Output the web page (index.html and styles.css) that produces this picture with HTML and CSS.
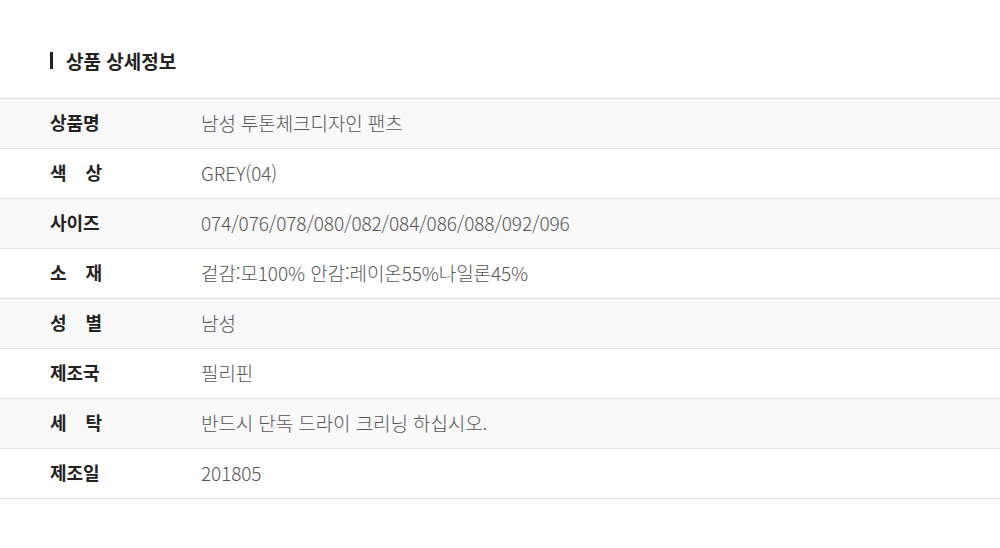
FILE: index.html
```html
<!DOCTYPE html>
<html lang="ko">
<head>
  <meta charset="UTF-8">
  <title>상품 상세정보</title>
  <link rel="stylesheet" href="styles.css">
</head>
<body>
  <div class="detail">
    <!-- 제목 -->
    <h2 class="detail-title">상품 상세정보</h2>

    <!-- 정보 표 -->
    <table class="info">
      <tr>
        <th><span class="label">상품명</span></th>
        <td>남성 투톤체크디자인 팬츠</td>
      </tr>
      <tr>
        <th><span class="label">색 상</span></th>
        <td>GREY(04)</td>
      </tr>
      <tr>
        <th><span class="label">사이즈</span></th>
        <td>074/076/078/080/082/084/086/088/092/096</td>
      </tr>
      <tr>
        <th><span class="label">소 재</span></th>
        <td>겉감:모100% 안감:레이온55%나일론45%</td>
      </tr>
      <tr>
        <th><span class="label">성 별</span></th>
        <td>남성</td>
      </tr>
      <tr>
        <th><span class="label">제조국</span></th>
        <td>필리핀</td>
      </tr>
      <tr>
        <th><span class="label">세 탁</span></th>
        <td>반드시 단독 드라이 크리닝 하십시오.</td>
      </tr>
      <tr>
        <th><span class="label">제조일</span></th>
        <td>201805</td>
      </tr>
    </table>
  </div>
</body>
</html>
```

FILE: styles.css
```css
/* RESET */
* {
  margin: 0;
  padding: 0;
  box-sizing: border-box;
}
body {
  background: #fff;
  font-family: "Noto Sans CJK KR", "Noto Sans", sans-serif;
  color: #222;
}

.detail {
  padding-top: 46px;
}

/* TYTUŁ */
.detail-title {
  display: flex;
  align-items: center;
  gap: 13px;
  margin-left: 50px;
  height: 28px;
  font-size: 19px;
  font-weight: 700;
  color: #222;
}
.detail-title::before {
  content: "";
  width: 3px;
  height: 17px;
  background: #222;
}

/* TABELA */
.info {
  width: 100%;
  margin-top: 24px;
  border-collapse: collapse;
  border-top: 1px solid #e2e2e2;
}
.info tr {
  height: 50px;
  border-bottom: 1px solid #e2e2e2;
}
.info tr:nth-child(odd) {
  background: #f9f9f9;
}
.info th,
.info td {
  padding-bottom: 3px;
}
.info th {
  width: 201px;
  padding-left: 50px;
  text-align: left;
  font-size: 18px;
  font-weight: 700;
  color: #222;
}
.info .label {
  display: inline-block;
  width: 52px;
  text-align: justify;
  text-align-last: justify;
}
.info td {
  font-size: 19px;
  font-weight: 300;
  color: #555;
  letter-spacing: -0.1px;
}
```
